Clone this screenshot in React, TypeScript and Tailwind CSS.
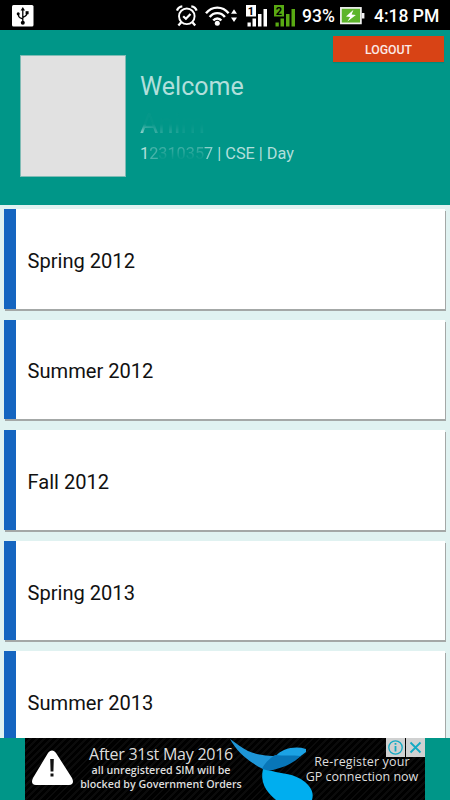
import React from "react";

const semesters = [
  "Spring 2012",
  "Summer 2012",
  "Fall 2012",
  "Spring 2013",
  "Summer 2013",
];

const UsbIcon = () => (
  <svg width="22" height="22" viewBox="0 0 22 22" className="ml-3">
    <rect width="21.5" height="21.5" rx="1.5" fill="#fff" />
    <g fill="none" stroke="#000" strokeWidth="1.3">
      <path d="M10.8 4v13M10.8 14.5C10.8 13 6.3 14 6.3 9.5M10.8 13c0-1.7 4.2-.8 4.2-5" />
    </g>
    <path d="M10.8 2l2.2 3.4H8.6z" />
    <circle cx="6.2" cy="8.8" r="1.5" />
    <rect x="13.6" y="6.2" width="3" height="3" />
    <circle cx="10.8" cy="17.8" r="2" />
  </svg>
);

const AlarmIcon = () => (
  <svg width="22" height="22" viewBox="0 0 22 22" fill="none" stroke="#fff">
    <circle cx="10.8" cy="11.3" r="7.8" strokeWidth="1.9" />
    <path d="M7.2 11.2l2.7 2.6 4.6-4.8" strokeWidth="2.2" />
    <path d="M1 5.6C1.8 3.3 3.8 1.5 6.3 1.3M20.6 5.6c-.8-2.3-2.8-4.1-5.3-4.3" strokeWidth="2.3" />
    <path d="M5.2 17.2l-2.8 3.4M16.4 17.2l2.8 3.4" strokeWidth="2.3" />
  </svg>
);

const WifiIcon = () => (
  <svg width="34" height="22" viewBox="0 0 34 22" fill="none" stroke="#fff" strokeWidth="2.4">
    <path d="M1 8.3C7 .7 17.6.7 23.6 8.3M4.7 12C8.7 6.8 15.9 6.8 19.9 12M8.3 15.5c2-2.7 6-2.7 8 0" />
    <circle cx="12.3" cy="18.2" r="2.5" fill="#fff" stroke="none" />
    <path d="M26 8.8l3-4.6 3 4.6zM26 12.5l3 4.6 3-4.6z" fill="#fff" stroke="none" />
  </svg>
);

const SignalIcon = ({ sim, color }: { sim: string; color: string }) => (
  <svg width="22" height="22" viewBox="0 0 22 22" fill={color}>
    <rect x="0" y="0" width="10" height="11.5" />
    <text x="5" y="9.8" textAnchor="middle" fill="#000" fontSize="11" fontWeight="700" fontFamily="Roboto, sans-serif">
      {sim}
    </text>
    <rect x="1.5" y="17.5" width="3.3" height="4" />
    <rect x="6.5" y="13.5" width="3.5" height="8" />
    <rect x="12" y="9" width="3.5" height="12.5" />
    <rect x="17.5" y="4" width="3.5" height="17.5" />
  </svg>
);

const BatteryIcon = () => (
  <svg width="25" height="18" viewBox="0 0 25 18">
    <rect x=".9" y=".9" width="20" height="15.5" fill="#5db52b" stroke="#f4f4f4" strokeWidth="1.7" />
    <rect x="21.7" y="6" width="2.7" height="5.5" fill="#f4f4f4" />
    <path d="M13.5 2.8L6 9.4l4.2.6-2.8 4.6 8.5-6.5-4.3-.7z" fill="#fff" />
  </svg>
);

const StatusBar = () => (
  <div className="flex h-[30px] shrink-0 items-center bg-black pt-0.5 text-white">
    <UsbIcon />
    <div className="ml-[142px] flex items-center">
      <AlarmIcon />
      <div className="ml-[7px]">
        <WifiIcon />
      </div>
      <div className="-mt-px ml-[7px]">
        <SignalIcon sim="1" color="#fff" />
      </div>
      <div className="-mt-px ml-[6px]">
        <SignalIcon sim="2" color="#59aa13" />
      </div>
    </div>
    <span className="ml-1.5 w-8 whitespace-nowrap text-[17.5px] font-medium">93%</span>
    <div className="-mt-px ml-1.5">
      <BatteryIcon />
    </div>
    <span className="ml-[9px] whitespace-nowrap text-[17.5px] font-medium">4:18 PM</span>
  </div>
);

const Header = () => (
  <div className="flex h-[175px] shrink-0 bg-[#009688] text-[#b2dfdb]">
    <div className="mt-[25px] ml-5 h-[122px] w-[106px] border border-[#80bcb5] bg-[#e1e1e1]" />
    <div className="mt-[41px] ml-3.5 whitespace-nowrap">
      <p className="h-8 text-[25px] leading-8">Welcome</p>
      <p className="mt-[5px] h-8 text-[28px] leading-8 [mask-image:linear-gradient(to_bottom,rgba(0,0,0,0.04)_50%,black_82%)]">
        <span className="[mask-image:linear-gradient(to_right,black,rgba(0,0,0,0.3))]">A</span>
        <span className="opacity-25">n</span>
        <span className="opacity-20">i</span>
        <span className="opacity-10">m</span>
      </p>
      <p className="mt-1 text-[16.3px] leading-5">
        <span>1</span>
        <span className="opacity-40">2</span>
        <span className="[mask-image:linear-gradient(to_bottom,rgba(0,0,0,0.35)_20%,rgba(0,0,0,0.05)_75%)]">31035</span>
        <span className="opacity-80">7</span>
        <span> | CSE | Day</span>
      </p>
    </div>
    <button className="mt-1.5 mr-1.5 ml-auto flex h-[26px] w-[111px] items-center justify-center bg-[#d84315] pt-0.5 text-[12.3px] font-medium text-[#fbe9e7] shadow-[0_1px_1px_#00897b]">
      LOGOUT
    </button>
  </div>
);

const SemesterCard = ({ title }: { title: string }) => (
  <div className="flex h-[99.6px] w-[441px] shrink-0 items-center border-l-12 border-[#1565c0] bg-white pl-[11.5px] text-[20.1px] text-[#111] shadow-[1px_2px_0_#a4a8a7]">
    <span className="pt-1">{title}</span>
  </div>
);

const AdBanner = () => (
  <div className="flex h-[62px] shrink-0 justify-center bg-[#009688]">
    <div className="relative flex w-[400px] overflow-hidden bg-[repeating-linear-gradient(135deg,#000_0_3px,#0b0b0b_3px_5px)] font-['Open_Sans',sans-serif] text-[#dedede]">
      <svg width="44" height="40" viewBox="0 0 44 40" className="mt-2 ml-1.5 shrink-0">
        <path d="M17 7c2-3.5 6-3.5 8 0l16 25c2 4 1 7-3 7H5c-4 0-5-3-3-7z" fill="#fff" />
        <path d="M19.2 13h3.6l-.4 12.5h-2.8z" fill="#111" />
        <rect x="19.5" y="27.5" width="3" height="3" fill="#111" />
      </svg>
      <div className="mt-[7px] ml-1 flex w-[164px] flex-col items-center whitespace-nowrap">
        <p className="h-[18px] text-[16px] leading-[19px] font-medium tracking-[-0.25px]">After 31st May 2016</p>
        <p className="h-[14px] text-[10.7px] leading-[14px] font-semibold">all unregistered SIM will be</p>
        <p className="h-[14px] text-[10.7px] leading-[14px] font-semibold">blocked by Government Orders</p>
      </div>
      <svg width="90" height="62" viewBox="0 0 90 62" className="absolute top-0 left-[200px]">
        <path d="M5 1c7 5 12 9 18 12 9 4 18 5 32 5L43 33l-5-2C24 24 12 14 5 1z" fill="#1e96d8" />
        <path d="M41 33c3-8 9-17 18-21 8-3 15-3 22-1v3C71 22 60 29 41 33z" fill="#1ba2e4" />
        <path d="M37 31c2-5 7-10 13-14 9 1 17 0 26 1-9 8-18 12-33 15z" fill="#0876b8" />
        <path d="M38 31c3 1 6 2 9 2 10 3 22 2 33 11 7 6 9 12 7 18H51C40 53 35 43 38 31z" fill="#00aeef" />
      </svg>
      <div className="mt-4 ml-[59px] flex w-[120px] flex-col items-center text-[12.5px] leading-[15px] font-medium whitespace-nowrap">
        <p className="h-[15px] tracking-[0.15px]">Re-register your</p>
        <p className="h-[15px]">GP connection now</p>
      </div>
      <div className="absolute top-0 right-0 flex gap-px">
        <div className="h-[19px] w-[19px] bg-[#d0d1d1]">
          <svg width="19" height="19" viewBox="0 0 19 19" fill="none" stroke="#12aac4">
            <circle cx="9.5" cy="9.5" r="6.7" strokeWidth="1.3" />
            <path d="M9.5 8v5.5M9.5 5v1.8" strokeWidth="1.8" />
          </svg>
        </div>
        <div className="h-[19px] w-[19px] bg-[#d0d1d1]">
          <svg width="19" height="19" viewBox="0 0 19 19" fill="none" stroke="#12aac4">
            <path d="M4.5 4.5l10 10M14.5 4.5l-10 10" strokeWidth="1.8" />
          </svg>
        </div>
      </div>
    </div>
  </div>
);

const App = () => {
  return (
    <div className="flex h-[800px] w-[450px] flex-col overflow-hidden bg-[#e0f2f1] font-[Roboto,sans-serif]">
      <StatusBar />
      <Header />
      {/* semester list */}
      <div className="flex min-h-0 flex-1 flex-col gap-[11px] overflow-hidden pt-1 pl-1">
        {semesters.map((title) => (
          <SemesterCard key={title} title={title} />
        ))}
      </div>
      <AdBanner />
    </div>
  );
};

export default App;
